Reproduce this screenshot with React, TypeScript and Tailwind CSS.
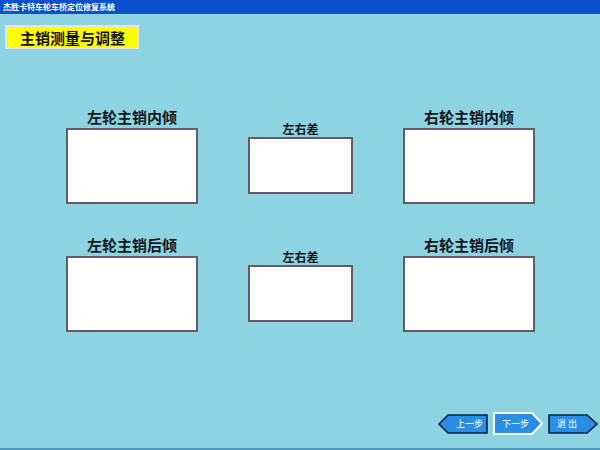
import React from "react";

const cjk = { fontFamily: '"Noto Sans CJK SC", "Noto Sans", sans-serif' };

function MeasureBox({ label, big }: { label: string; big: boolean }) {
  return big ? (
    <div className="flex flex-col items-center w-[132px]">
      <div className="text-[15px] leading-[18px] font-bold text-[#111820] mb-[2px]">{label}</div>
      <div className="w-[132px] h-[76px] bg-white border-2 border-[#5e5e6a]" />
    </div>
  ) : (
    <div className="flex flex-col items-center w-[105px] mt-[14px]">
      <div className="text-[12px] leading-[14px] font-bold text-[#111820] mb-[1px]">{label}</div>
      <div className="w-[105px] h-[57px] bg-white border-2 border-[#5e5e6a]" />
    </div>
  );
}

function NavButton({
  label,
  dir,
  active,
}: {
  label: string;
  dir: "left" | "right";
  active?: boolean;
}) {
  const w = 50;
  const h = active ? 23 : 20;
  const pts =
    dir === "left"
      ? `1,${h / 2} 10,1 ${w - 1},1 ${w - 1},${h - 1} 10,${h - 1}`
      : `1,1 ${w - 11},1 ${w - 1},${h / 2} ${w - 11},${h - 1} 1,${h - 1}`;
  return (
    <div className="relative flex items-center" style={{ width: w, height: h }}>
      <svg width={w} height={h} className="absolute inset-0">
        <polygon
          points={pts}
          fill="#2a8fe4"
          stroke={active ? "#ffffff" : "#0c2440"}
          strokeWidth={active ? 2 : 1.6}
          strokeLinejoin="miter"
        />
      </svg>
      <span
        className={`relative text-[9px] leading-none text-white whitespace-pre ${
          dir === "left" ? "ml-[18px]" : "ml-[9px]"
        }`}
      >
        {label}
      </span>
    </div>
  );
}

export default function App() {
  return (
    <div className="w-[600px] h-[450px] bg-[#8ed3e1] flex flex-col overflow-hidden" style={cjk}>
      <div className="h-[14px] bg-[#0a50cc] flex items-center pl-[3px]">
        <span className="text-[8px] leading-none font-bold text-white">杰胜卡特车轮车桥定位修复系统</span>
      </div>

      <div className="mt-[11px] ml-[5px] w-[134px] h-[24px] bg-[#ffff00] border-2 border-[#e4e4d8] flex items-center pl-[13px]">
        <span className="text-[15px] leading-none font-bold text-[#111]">主销测量与调整</span>
      </div>

      <div className="mt-[59px] ml-[66px] flex gap-[50px]">
        <MeasureBox label="左轮主销内倾" big />
        <MeasureBox label="左右差" big={false} />
        <MeasureBox label="右轮主销内倾" big />
      </div>

      <div className="mt-[32px] ml-[66px] flex gap-[50px]">
        <MeasureBox label="左轮主销后倾" big />
        <MeasureBox label="左右差" big={false} />
        <MeasureBox label="右轮主销后倾" big />
      </div>

      <div className="mt-auto mb-[13px] flex justify-end items-center gap-[5px] pr-[2px]">
        <NavButton label="上一步" dir="left" />
        <NavButton label="下一步" dir="right" active />
        <NavButton label="退 出" dir="right" />
      </div>
      <div className="h-[2px] bg-[#4a98b4]" />
    </div>
  );
}
